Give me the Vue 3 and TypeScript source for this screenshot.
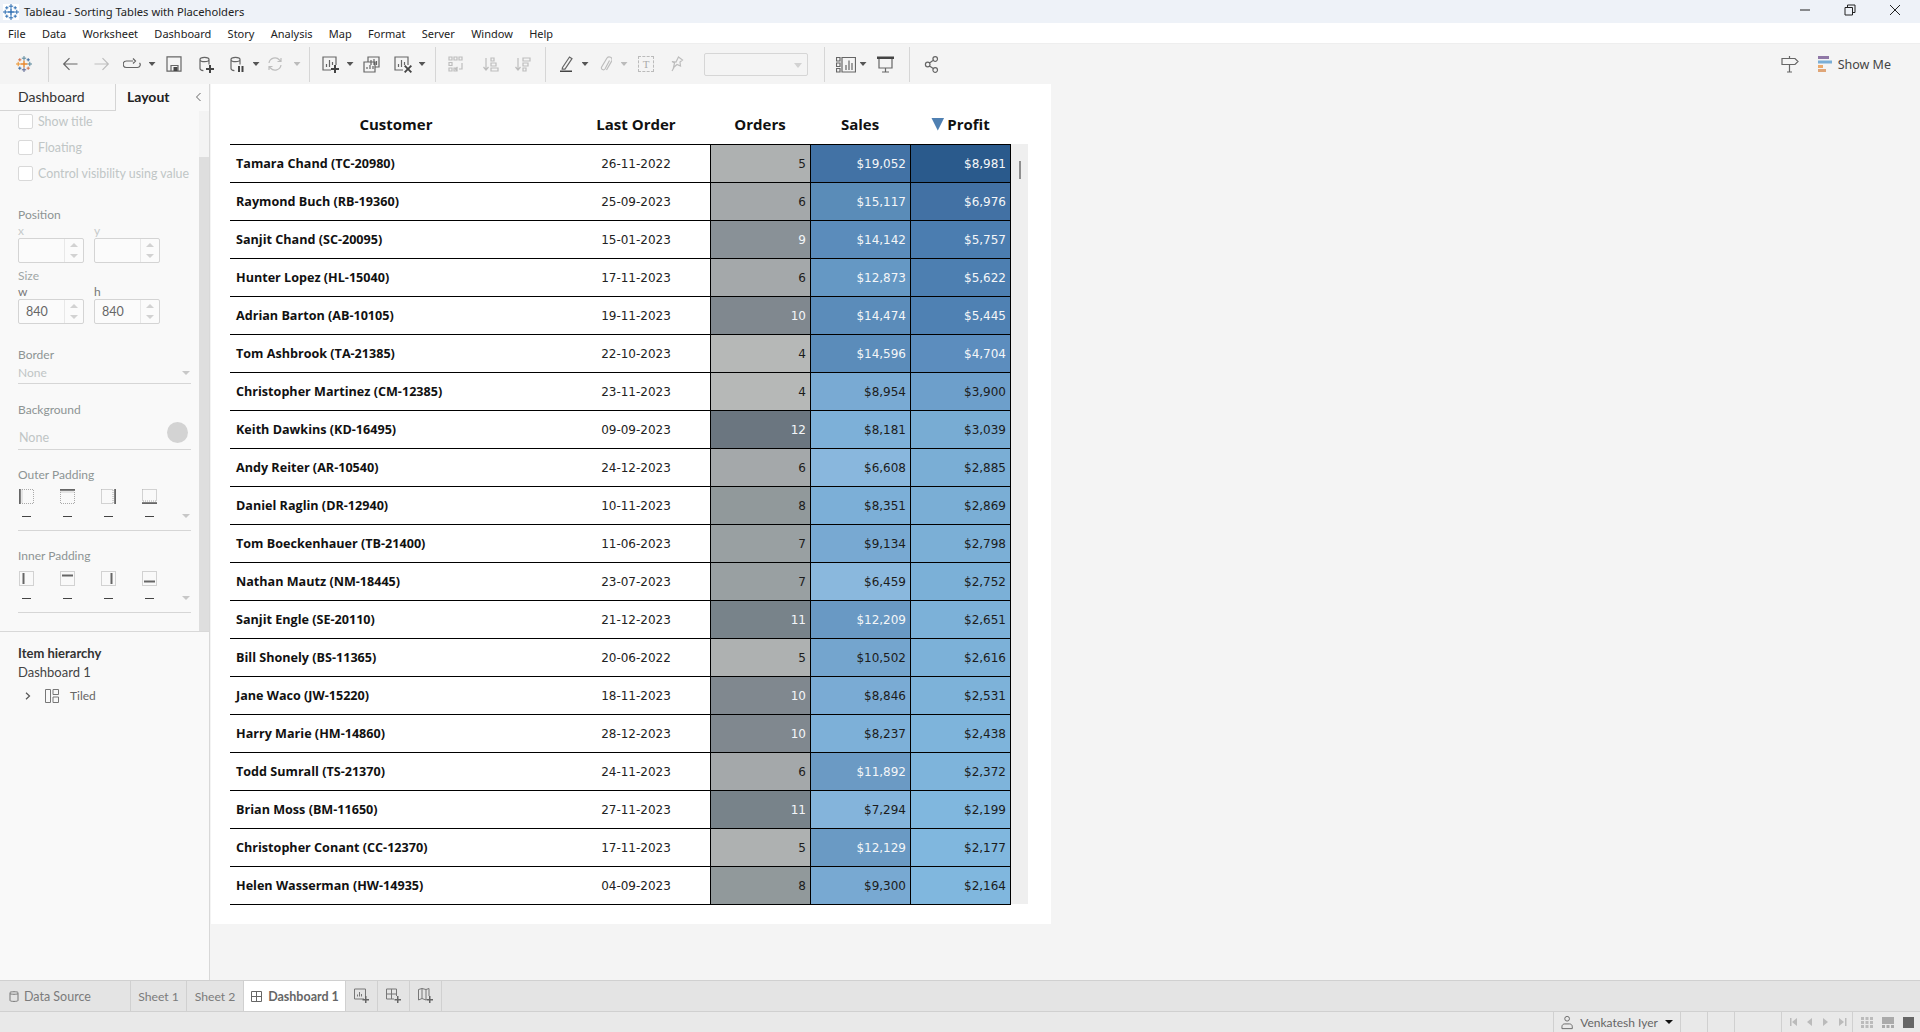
<script setup lang="ts">
interface Row {
  name: string;
  date: string;
  orders: number;
  sales: number;
  profit: number;
}

interface Tool {
  c: number;
  w: number;
  kind?: "caret" | "sep" | "logo" | "select" | "text";
  d?: string;
  f?: string;
  dim?: boolean;
}

type Stop = [number, number, number, number];

const rows: Row[] = [
  { name: "Tamara Chand (TC-20980)", date: "26-11-2022", orders: 5, sales: 19052, profit: 8981 },
  { name: "Raymond Buch (RB-19360)", date: "25-09-2023", orders: 6, sales: 15117, profit: 6976 },
  { name: "Sanjit Chand (SC-20095)", date: "15-01-2023", orders: 9, sales: 14142, profit: 5757 },
  { name: "Hunter Lopez (HL-15040)", date: "17-11-2023", orders: 6, sales: 12873, profit: 5622 },
  { name: "Adrian Barton (AB-10105)", date: "19-11-2023", orders: 10, sales: 14474, profit: 5445 },
  { name: "Tom Ashbrook (TA-21385)", date: "22-10-2023", orders: 4, sales: 14596, profit: 4704 },
  { name: "Christopher Martinez (CM-12385)", date: "23-11-2023", orders: 4, sales: 8954, profit: 3900 },
  { name: "Keith Dawkins (KD-16495)", date: "09-09-2023", orders: 12, sales: 8181, profit: 3039 },
  { name: "Andy Reiter (AR-10540)", date: "24-12-2023", orders: 6, sales: 6608, profit: 2885 },
  { name: "Daniel Raglin (DR-12940)", date: "10-11-2023", orders: 8, sales: 8351, profit: 2869 },
  { name: "Tom Boeckenhauer (TB-21400)", date: "11-06-2023", orders: 7, sales: 9134, profit: 2798 },
  { name: "Nathan Mautz (NM-18445)", date: "23-07-2023", orders: 7, sales: 6459, profit: 2752 },
  { name: "Sanjit Engle (SE-20110)", date: "21-12-2023", orders: 11, sales: 12209, profit: 2651 },
  { name: "Bill Shonely (BS-11365)", date: "20-06-2022", orders: 5, sales: 10502, profit: 2616 },
  { name: "Jane Waco (JW-15220)", date: "18-11-2023", orders: 10, sales: 8846, profit: 2531 },
  { name: "Harry Marie (HM-14860)", date: "28-12-2023", orders: 10, sales: 8237, profit: 2438 },
  { name: "Todd Sumrall (TS-21370)", date: "24-11-2023", orders: 6, sales: 11892, profit: 2372 },
  { name: "Brian Moss (BM-11650)", date: "27-11-2023", orders: 11, sales: 7294, profit: 2199 },
  { name: "Christopher Conant (CC-12370)", date: "17-11-2023", orders: 5, sales: 12129, profit: 2177 },
  { name: "Helen Wasserman (HW-14935)", date: "04-09-2023", orders: 8, sales: 9300, profit: 2164 },
];

const orderStops: Stop[] = [
  [4, 182, 184, 183],
  [5, 174, 177, 177],
  [6, 164, 168, 170],
  [7, 153, 160, 162],
  [8, 145, 153, 155],
  [9, 137, 145, 151],
  [10, 128, 136, 143],
  [11, 120, 131, 138],
  [12, 107, 118, 128],
];
const salesStops: Stop[] = [
  [6459, 138, 184, 221],
  [8181, 125, 176, 216],
  [9134, 120, 169, 210],
  [10502, 116, 165, 206],
  [11892, 107, 154, 196],
  [12873, 101, 152, 196],
  [14142, 91, 140, 187],
  [15117, 90, 140, 184],
  [19052, 66, 114, 165],
];
const profitStops: Stop[] = [
  [2164, 128, 183, 222],
  [2885, 122, 174, 213],
  [3900, 109, 159, 203],
  [4704, 92, 141, 190],
  [5445, 79, 129, 179],
  [5757, 75, 125, 176],
  [6976, 66, 113, 164],
  [8981, 42, 90, 140],
];

const shade = (value: number, stops: Stop[]): string => {
  for (let i = 1; i < stops.length; i++) {
    if (value <= stops[i][0]) {
      const a = stops[i - 1];
      const b = stops[i];
      const t = (value - a[0]) / (b[0] - a[0]);
      const mix = (n: number): number => Math.round(a[n] + (b[n] - a[n]) * t);
      return `rgb(${mix(1)},${mix(2)},${mix(3)})`;
    }
  }
  return "#888";
};

const money = (n: number): string => "$" + n.toLocaleString("en-US");

const menus = ["File", "Data", "Worksheet", "Dashboard", "Story", "Analysis", "Map", "Format", "Server", "Window", "Help"];

const cylinder = "M2 3.5c0-1.3 2-2.2 4.5-2.2S11 2.2 11 3.5v5M2 3.5c0 1.3 2 2.2 4.5 2.2S11 4.8 11 3.5M2 3.5v9c0 1 1.3 1.9 3.4 2.1";

const toolDefs: Tool[] = [
  { c: 24, w: 16, kind: "logo" },
  { c: 48, w: 1, kind: "sep" },
  { c: 70, w: 16, d: "M15.5 8H1.5M7.5 2.2L1.7 8l5.8 5.8" },
  { c: 102, w: 16, dim: true, d: "M.5 8h14M8.5 2.2L14.3 8l-5.8 5.8" },
  { c: 132, w: 18, d: "M10 5H3.5a2.8 2.8 0 0 0 0 6.5h11a2.8 2.8 0 0 0 2-4.700M10 2.500L12.500 5 10 7.500" },
  { c: 152, w: 7, kind: "caret" },
  { c: 174, w: 16, d: "M1 .8h14v14.400H1zM5 15V9.500h7V15", f: "M7.500 11h4v4h-4z" },
  { c: 206, w: 17, d: cylinder, f: "M11 9h2v3h3v2h-3v3h-2v-3H8v-2h3z" },
  { c: 237, w: 16, d: cylinder, f: "M9 10h2v6H9zM12.500 10h2v6h-2z" },
  { c: 256, w: 7, kind: "caret" },
  { c: 275, w: 16, dim: true, d: "M2 7a6 6 0 0 1 10.500-3l1.500 1.500M14 9a6 6 0 0 1-10.500 3L2 10.500M14 2v3.500h-3.500M2 14v-3.500h3.500" },
  { c: 297, w: 7, dim: true, kind: "caret" },
  { c: 309, w: 1, kind: "sep" },
  { c: 331, w: 19, d: "M9 14H1V1h13v8M4.500 11V8M7.500 11V4M10.500 9V6", f: "M12 9h2v3h3v2h-3v3h-2v-3H9v-2h3z" },
  { c: 350, w: 7, kind: "caret" },
  { c: 371, w: 17, d: "M5 6V1h11v10h-4M1 6h11v10H1zM8 4V9M11 3v6M13.500 5v4M4 13v-2M7 13v-4M10 13v-3" },
  { c: 403, w: 19, d: "M9 14H1V1h13v8M4.500 11V8M7.500 11V4M10.500 9V6", f: "M11.300 9L14 11.700 16.700 9l1.300 1.300-2.700 2.700 2.700 2.700L16.700 17 14 14.300 11.300 17 10 15.700l2.700-2.700L10 10.300z" },
  { c: 422, w: 7, kind: "caret" },
  { c: 435.5, w: 1, kind: "sep" },
  { c: 456, w: 17, dim: true, d: "M1 1h3v3H1zM6 1h3v3H6zM11 1h3v3h-3zM1 6.500h3v3H1zM1 12h3v3H1zM6 12h3v3H6zM14 7v6h-3M9.500 11l-2 2 2 2" },
  { c: 490, w: 17, dim: true, d: "M4 2v12M1.500 11L4 14l2.500-3M9 2h3v3H9zM9 7h5v3H9zM9 12h7v3H9z" },
  { c: 522, w: 17, dim: true, d: "M4 2v12M1.500 11L4 14l2.500-3M9 2h7v3H9zM9 7h5v3H9zM9 12h3v3H9z" },
  { c: 545, w: 1, kind: "sep" },
  { c: 567, w: 16, d: "M3.500 11.500L10.500 1l2.500 1.700-7 10.500-2.800 0z", f: "M1 14.500h12v1.500H1z" },
  { c: 585, w: 7, kind: "caret" },
  { c: 606, w: 12, dim: true, d: "M9.500 4.500L5 13a2 2 0 0 1-3.500-1.800L7 2a2.800 2.800 0 0 1 4.800 2.800L6.500 14" },
  { c: 624, w: 7, dim: true, kind: "caret" },
  { c: 646, w: 16, dim: true, kind: "text" },
  { c: 677, w: 14, dim: true, d: "M8.500 1l4 3-2.500 2 .5 4-3.500-1.500-3.500 3 1-4.500L2 5.500l4 .5zM4 11.500L2 15" },
  { c: 756, w: 104, kind: "select" },
  { c: 824, w: 1, kind: "sep" },
  { c: 846, w: 20, d: "M.5 1.500h3.500v3.500H.5zM.5 7h3.500v3.500H.5zM.5 12.500h3.500v3.500H.5zM6 1.500h13.500v14.500H6zM10 14V9M13 14V4.500M16 14v-7" },
  { c: 863, w: 7, kind: "caret" },
  { c: 885, w: 17, d: "M2 2h13v10H2zM8.500 12v4M5 16h7", f: "M0 .5h17v2.500H0z" },
  { c: 909, w: 1, kind: "sep" },
  { c: 932, w: 16, d: "M5.500 7L10 3.800M5.500 10L10 13M13.500 3a2.300 2.300 0 1 1-4.600 0 2.300 2.300 0 0 1 4.600 0zM6 8.500a2.300 2.300 0 1 1-4.600 0 2.300 2.300 0 0 1 4.600 0zM13.500 14a2.300 2.300 0 1 1-4.600 0 2.300 2.300 0 0 1 4.600 0z" },
];

// gap before each tool comes from the centre it should sit on
const tools = toolDefs.map((t, i) => {
  const prev = i ? toolDefs[i - 1].c + toolDefs[i - 1].w / 2 : 0;
  return { ...t, gap: t.c - t.w / 2 - prev };
});

const crosses = [
  { x: 8, y: 8, r: 3.5, s: 1.4, color: "#e8862c" },
  { x: 8, y: 2.2, r: 2.2, s: 1, color: "#5b879b" },
  { x: 8, y: 13.8, r: 2.2, s: 1, color: "#5c6692" },
  { x: 2.2, y: 8, r: 2.2, s: 1, color: "#eb912b" },
  { x: 13.8, y: 8, r: 2.2, s: 1, color: "#59879b" },
  { x: 3.8, y: 3.8, r: 1.6, s: 1, color: "#d0704a" },
  { x: 12.2, y: 3.8, r: 1.6, s: 1, color: "#3a6a9e" },
  { x: 3.8, y: 12.2, r: 1.6, s: 1, color: "#3a6a9e" },
  { x: 12.2, y: 12.2, r: 1.6, s: 1, color: "#d0704a" },
];

const paddingIcons = [
  { bar: "M.8 0v15", box: "M3 .5h11.500v14H3z" },
  { bar: "M0 .8h15", box: "M.5 3h14v11.500H.5z" },
  { bar: "M14.200 0v15", box: "M.5 .5H12v14H.5z" },
  { bar: "M0 14.200h15", box: "M.5 .5h14V12H.5z" },
];
const innerIcons = [
  { bar: "M4.500 2v11", box: "M.5 .5h14v14H.5z" },
  { bar: "M2 4.500h11", box: "M.5 .5h14v14H.5z" },
  { bar: "M10.500 2v11", box: "M.5 .5h14v14H.5z" },
  { bar: "M2 10.500h11", box: "M.5 .5h14v14H.5z" },
];
</script>

<template>
  <div class="app">
    <header class="titlebar">
      <svg class="title-logo" width="16" height="16" viewBox="0 0 16 16">
        <path v-for="(c, i) in crosses" :key="i" :d="`M${c.x - c.r} ${c.y}h${c.r * 2}M${c.x} ${c.y - c.r}v${c.r * 2}`" stroke="#2f6fb3" :stroke-width="c.s" />
      </svg>
      <span class="title-text">Tableau - Sorting Tables with Placeholders</span>
      <div class="win-controls">
        <svg width="12" height="12" viewBox="0 0 12 12"><path d="M1 6h10" stroke="#222" fill="none" /></svg>
        <svg width="12" height="12" viewBox="0 0 12 12"><path d="M1 3.500h7.500V11H1zM3.500 3.500V1H11v7.500H8.500" stroke="#222" fill="none" /></svg>
        <svg width="12" height="12" viewBox="0 0 12 12"><path d="M1 1l10 10M11 1L1 11" stroke="#222" fill="none" /></svg>
      </div>
    </header>

    <nav class="menubar">
      <span v-for="m in menus" :key="m" class="menu">{{ m }}</span>
    </nav>

    <div class="toolbar">
      <template v-for="(t, i) in tools" :key="i">
        <span v-if="t.kind === 'sep'" class="tb-sep" :style="{ marginLeft: t.gap + 'px' }"></span>
        <span v-else-if="t.kind === 'caret'" class="tb-caret" :class="{ dim: t.dim }" :style="{ marginLeft: t.gap + 'px' }"></span>
        <span v-else-if="t.kind === 'select'" class="tb-select" :style="{ marginLeft: t.gap + 'px' }"><i></i></span>
        <span v-else-if="t.kind === 'text'" class="tb-textbox" :style="{ marginLeft: t.gap + 'px' }">T</span>
        <svg v-else-if="t.kind === 'logo'" :width="t.w" height="16" viewBox="0 0 16 16" :style="{ marginLeft: t.gap + 'px' }">
          <path v-for="(c, j) in crosses" :key="j" :d="`M${c.x - c.r} ${c.y}h${c.r * 2}M${c.x} ${c.y - c.r}v${c.r * 2}`" :stroke="c.color" :stroke-width="c.s" />
        </svg>
        <svg v-else :width="t.w" height="17" :viewBox="`0 0 ${t.w} 17`" :class="['tb-icon', { dim: t.dim }]" :style="{ marginLeft: t.gap + 'px' }">
          <path :d="t.d" />
          <path v-if="t.f" :d="t.f" class="solid" />
        </svg>
      </template>

      <div class="tb-right">
        <svg width="18" height="18" viewBox="0 0 18 18" class="tb-icon">
          <path d="M1 3.500h13l3 3-3 3H1zM8.500 1v2.500M8.500 9.500V17M6 17h5" />
        </svg>
        <span class="showme">
          <svg width="14" height="16" viewBox="0 0 14 16">
            <rect x="0" y="0" width="11" height="3" fill="#8f77a6" />
            <rect x="0" y="4.500" width="14" height="3" fill="#7aaed6" />
            <rect x="0" y="9" width="5" height="3" fill="#eaa96c" />
            <rect x="0" y="13" width="8" height="3" fill="#dfa577" />
          </svg>
          Show Me
        </span>
      </div>
    </div>

    <div class="main">
      <aside class="side">
        <div class="side-tabs">
          <span class="side-tab">Dashboard</span>
          <span class="side-tab on">Layout</span>
          <svg width="7" height="10" viewBox="0 0 7 10"><path d="M5.500 1L1.500 5l4 4" fill="none" stroke="#666" /></svg>
        </div>

        <div class="side-scroll">
          <div class="side-body">
            <label class="check"><i></i>Show title</label>
            <label class="check"><i></i>Floating</label>
            <label class="check"><i></i>Control visibility using value</label>

            <div class="lab pos-lab">Position</div>
            <div class="field-labs dim-lab"><span>x</span><span>y</span></div>
            <div class="fields">
              <div class="spin"><span></span><em><b></b><u></u></em></div>
              <div class="spin"><span></span><em><b></b><u></u></em></div>
            </div>

            <div class="lab size-lab">Size</div>
            <div class="field-labs"><span>w</span><span>h</span></div>
            <div class="fields">
              <div class="spin"><span>840</span><em><b></b><u></u></em></div>
              <div class="spin"><span>840</span><em><b></b><u></u></em></div>
            </div>

            <div class="lab border-lab">Border</div>
            <div class="none-row">None<i class="down"></i></div>

            <div class="lab bg-lab">Background</div>
            <div class="bg-row">None<i class="swatch"></i></div>

            <div class="lab pad-lab">Outer Padding</div>
            <div class="pads">
              <svg v-for="(p, i) in paddingIcons" :key="i" width="15" height="15" viewBox="0 0 15 15">
                <path :d="p.box" class="dots" />
                <path :d="p.bar" class="bar" />
              </svg>
            </div>
            <div class="pad-vals"><i></i><i></i><i></i><i></i><i class="down"></i></div>

            <div class="lab pad-lab">Inner Padding</div>
            <div class="pads inner">
              <svg v-for="(p, i) in innerIcons" :key="i" width="15" height="15" viewBox="0 0 15 15">
                <path :d="p.box" class="dots" />
                <path :d="p.bar" class="bar" />
              </svg>
            </div>
            <div class="pad-vals"><i></i><i></i><i></i><i></i><i class="down"></i></div>
          </div>
          <div class="side-bar"><div class="side-thumb"></div></div>
        </div>

        <div class="hierarchy">
          <div class="h-title">Item hierarchy</div>
          <div class="h-dash">Dashboard 1</div>
          <div class="h-tiled">
            <svg width="6" height="8" viewBox="0 0 6 8"><path d="M1 .8L4.500 4 1 7.200" fill="none" stroke="#555" stroke-width="1.200" /></svg>
            <svg width="14" height="14" viewBox="0 0 14 14"><path d="M.5 .5h5v13h-5zM8 .5h5.500v5H8zM8 8h5.500v5.500H8z" fill="none" stroke="#777" /></svg>
            <span>Tiled</span>
          </div>
        </div>
      </aside>

      <section class="stage">
        <div class="canvas">
          <div class="thead">
            <div>Customer</div>
            <div>Last Order</div>
            <div>Orders</div>
            <div>Sales</div>
            <div class="sorted"><i></i>Profit</div>
          </div>
          <div class="tbody-wrap">
            <div class="tbody">
              <div v-for="r in rows" :key="r.name" class="row">
                <div class="c-name">{{ r.name }}</div>
                <div class="c-date">{{ r.date }}</div>
                <div class="c-num" :class="{ light: r.orders >= 9 }" :style="{ background: shade(r.orders, orderStops) }">{{ r.orders }}</div>
                <div class="c-num" :class="{ light: r.sales >= 11000 }" :style="{ background: shade(r.sales, salesStops) }">{{ money(r.sales) }}</div>
                <div class="c-num" :class="{ light: r.profit >= 4000 }" :style="{ background: shade(r.profit, profitStops) }">{{ money(r.profit) }}</div>
              </div>
            </div>
            <div class="tscroll"><div class="tthumb"></div></div>
          </div>
        </div>
      </section>
    </div>

    <div class="sheet-tabs">
      <div class="s-tab ds">
        <svg width="10" height="13" viewBox="0 0 10 13"><path d="M1 2.500C1 1.500 9 1.500 9 2.500v8c0 1.200-8 1.200-8 0zM1 3.500c0 1 8 1 8 0" fill="none" stroke="#777" /></svg>
        Data Source
      </div>
      <div class="s-tab sh1">Sheet 1</div>
      <div class="s-tab sh2">Sheet 2</div>
      <div class="s-tab active">
        <svg width="13" height="13" viewBox="0 0 13 13"><path d="M1.500 1.500h10v10h-10zM6.500 1.500v10M1.500 6.500h10" fill="none" stroke="#666" /></svg>
        Dashboard 1
      </div>
      <div class="s-tab add">
        <svg width="16" height="16" viewBox="0 0 16 16"><path d="M10 11H.5V1h11v7M3.500 8.500V6.500M5.500 8.500V4M7.500 8.500V6" fill="none" stroke="#777" /><path d="M11 8h1.500v3H15v1.500h-2.500V15H11v-2.500H8.500V11H11z" fill="#666" /></svg>
      </div>
      <div class="s-tab add">
        <svg width="16" height="16" viewBox="0 0 16 16"><path d="M8 11H.5V1h10v7M5.500 1v10M.5 6h10" fill="none" stroke="#777" /><path d="M11 8h1.500v3H15v1.500h-2.500V15H11v-2.500H8.500V11H11z" fill="#666" /></svg>
      </div>
      <div class="s-tab add">
        <svg width="16" height="16" viewBox="0 0 16 16"><path d="M8 12l-4-1.500L.5 12V1.500L4 .5l4 1 3 -1V8M4 .5v10M8 1.500V12" fill="none" stroke="#777" /><path d="M11 8h1.500v3H15v1.500h-2.500V15H11v-2.500H8.500V11H11z" fill="#666" /></svg>
      </div>
    </div>

    <footer class="status">
      <div class="st user">
        <svg width="13" height="15" viewBox="0 0 13 15"><path d="M6.500 1a2.500 2.500 0 1 1 0 5 2.500 2.500 0 0 1 0-5zM1 14v-2c0-2 1.500-3 3-3h5c1.500 0 3 1 3 3v2z" fill="none" stroke="#666" /></svg>
        <span>Venkatesh Iyer</span>
        <i></i>
      </div>
      <div class="st w27"></div>
      <div class="st w27"></div>
      <div class="st w47"></div>
      <div class="st pager">
        <svg width="60" height="10" viewBox="0 0 60 10" fill="#bbb">
          <path d="M0 1h1.500v8H0zM7 1v8L2 5zM22 1v8l-5-4zM33 1l5 4-5 4zM49 1l5 4-5 4zM55 1h1.500v8H55z" />
        </svg>
      </div>
      <div class="st views">
        <svg width="12" height="11" viewBox="0 0 12 11" fill="#bbb">
          <path d="M0 0h3v3H0zM4.500 0h3v3h-3zM9 0h3v3H9zM0 4h3v3H0zM4.500 4h3v3h-3zM9 4h3v3H9zM0 8h3v3H0zM4.500 8h3v3h-3zM9 8h3v3H9z" />
        </svg>
        <svg width="12" height="11" viewBox="0 0 12 11" fill="#aaa">
          <path d="M0 0h12v7H0zM0 8h3v3H0zM4.500 8h3v3h-3zM9 8h3v3H9z" />
        </svg>
        <span class="full"></span>
      </div>
    </footer>
  </div>
</template>

<style scoped>
.app {
  width: 1920px;
  height: 1032px;
  display: flex;
  flex-direction: column;
  overflow: hidden;
  font-family: Lato, "Noto Sans", sans-serif;
  color: #333;
  background: #f4f4f4;
}

.titlebar {
  height: 23px;
  flex: none;
  display: flex;
  align-items: center;
  background: #eef2f8;
  padding-left: 3px;
  font-family: "Noto Sans", sans-serif;
  font-size: 11.2px;
  color: #222;
}
.title-logo {
  background: #fff;
  margin-right: 5px;
}
.win-controls {
  margin-left: auto;
  display: flex;
  gap: 33px;
  padding-right: 19px;
  margin-top: -3px;
}

.menubar {
  height: 20px;
  flex: none;
  display: flex;
  align-items: center;
  background: #fff;
  font-family: "Noto Sans", sans-serif;
  font-size: 11px;
  color: #222;
  padding-left: 8px;
  gap: 16.3px;
}

.toolbar {
  height: 41px;
  flex: none;
  display: flex;
  align-items: center;
  background: #f4f4f4;
  border-top: 1px solid #eee;
  box-sizing: border-box;
}
.tb-sep {
  width: 1px;
  height: 35px;
  background: #d6d6d6;
}
.tb-caret {
  width: 7px;
  height: 4px;
  background: #555;
  clip-path: polygon(0 0, 100% 0, 50% 100%);
}
.tb-caret.dim {
  background: #bbb;
}
.tb-icon {
  fill: none;
  stroke: #666;
  stroke-width: 1.2;
}
.tb-icon .solid {
  fill: #444;
  stroke: none;
}
.tb-icon.dim {
  stroke: #bdbdbd;
}
.tb-icon.dim .solid {
  fill: #bdbdbd;
}
.tb-select {
  width: 104px;
  height: 23px;
  box-sizing: border-box;
  border: 1px solid #d6d6d6;
  border-radius: 2px;
  position: relative;
}
.tb-select i {
  position: absolute;
  right: 5px;
  top: 9px;
  border-left: 4px solid transparent;
  border-right: 4px solid transparent;
  border-top: 5px solid #d2d2d2;
}
.tb-textbox {
  width: 16px;
  height: 16px;
  box-sizing: border-box;
  border: 1px dashed #bbb;
  text-align: center;
  font: 11px/14px "Liberation Serif", serif;
  color: #aaa;
}
.tb-right {
  margin-left: auto;
  display: flex;
  align-items: center;
  padding-right: 29px;
  gap: 19px;
}
.showme {
  display: flex;
  align-items: center;
  gap: 6px;
  font-family: "Noto Sans", sans-serif;
  font-size: 12.5px;
  color: #444;
}

.main {
  flex: 1;
  min-height: 0;
  display: flex;
}

.side {
  width: 210px;
  flex: none;
  box-sizing: border-box;
  border-right: 1px solid #d8d8d8;
  background: #f9f9f9;
  display: flex;
  flex-direction: column;
}
.side-tabs {
  height: 27px;
  flex: none;
  display: flex;
  align-items: center;
  position: relative;
}
.side-tabs svg {
  position: absolute;
  right: 7px;
  top: 8px;
}
.side-tab {
  font-size: 14px;
  color: #333;
  height: 27px;
  line-height: 26px;
  box-sizing: border-box;
}
.side-tab:first-child {
  width: 116px;
  padding-left: 18px;
  border-right: 1px solid #d5d5d5;
  border-bottom: 1px solid #d5d5d5;
}
.side-tab.on {
  font-weight: 700;
  padding-left: 11px;
  color: #222;
}
.side-scroll {
  height: 520px;
  flex: none;
  display: flex;
  border-bottom: 1px solid #d8d8d8;
  box-sizing: content-box;
}
.side-body {
  flex: 1;
  padding-left: 18px;
  font-size: 11.5px;
  color: #888;
}
.side-bar {
  width: 10px;
  flex: none;
  background: #dedede;
}
.side-thumb {
  height: 46px;
  background: #f3f3f3;
}

.check {
  display: flex;
  align-items: center;
  gap: 5px;
  height: 21px;
  margin-bottom: 5px;
  font-size: 12.4px;
  color: #c0c6c6;
}
.check i {
  width: 15px;
  height: 15px;
  box-sizing: border-box;
  border: 1px solid #d9d9d9;
  border-radius: 2px;
  background: #fff;
}
.lab {
  height: 14px;
  line-height: 14px;
  font-size: 12px;
  color: #8d9494;
}
.pos-lab {
  margin-top: 24px;
}
.size-lab {
  margin-top: 6px;
  color: #a0a6a6;
}
.border-lab {
  margin-top: 24px;
}
.bg-lab {
  margin-top: 19px;
}
.pad-lab {
  margin-top: 18px;
}
.field-labs {
  display: flex;
  height: 16px;
  line-height: 17px;
  font-size: 12px;
  color: #777;
}
.field-labs span {
  width: 76px;
}
.field-labs.dim-lab {
  color: #c6caca;
}
.fields {
  display: flex;
  gap: 10px;
}
.spin {
  width: 66px;
  height: 25px;
  box-sizing: border-box;
  border: 1px solid #d4d4d4;
  border-radius: 2px;
  display: flex;
  align-items: center;
  background: #fbfbfb;
}
.spin span {
  flex: 1;
  padding-left: 7px;
  font-size: 12.5px;
  color: #666;
}
.spin em {
  width: 18px;
  height: 23px;
  border-left: 1px solid #e8e8e8;
  display: flex;
  flex-direction: column;
  align-items: center;
  justify-content: center;
  gap: 7px;
}
.spin b {
  border-left: 4px solid transparent;
  border-right: 4px solid transparent;
  border-bottom: 4px solid #d2d2d2;
}
.spin u {
  border-left: 4px solid transparent;
  border-right: 4px solid transparent;
  border-top: 4px solid #d2d2d2;
}
.none-row {
  width: 173px;
  height: 22px;
  box-sizing: border-box;
  border-bottom: 1px solid #d6d6d6;
  font-size: 12px;
  line-height: 22px;
  color: #bfc5c5;
  position: relative;
}
.down {
  position: absolute;
  right: 1px;
  top: 9px;
  border-left: 4px solid transparent;
  border-right: 4px solid transparent;
  border-top: 4px solid #c8c8c8;
}
.bg-row {
  width: 173px;
  height: 33px;
  box-sizing: border-box;
  border-bottom: 1px solid #d6d6d6;
  font-size: 12.5px;
  line-height: 42px;
  padding-left: 1px;
  color: #bfc5c5;
  position: relative;
}
.swatch {
  position: absolute;
  right: 3px;
  top: 5px;
  width: 21px;
  height: 21px;
  border-radius: 50%;
  background: #d3d3d3;
}
.pads {
  display: flex;
  gap: 26px;
  height: 15px;
  margin-top: 7px;
  padding-left: 1px;
}
.pads.inner {
  margin-top: 8px;
}
.dots {
  fill: none;
  stroke: #aaa;
  stroke-dasharray: 1 1;
}
.bar {
  fill: none;
  stroke: #666;
  stroke-width: 2;
}
.pad-vals {
  width: 173px;
  height: 27px;
  box-sizing: border-box;
  border-bottom: 1px solid #d6d6d6;
  display: flex;
  gap: 32px;
  align-items: flex-start;
  padding: 12px 0 0 4px;
  position: relative;
}
.pad-vals i {
  width: 9px;
  height: 1px;
  background: #444;
}
.pad-vals i.down {
  width: 0;
  height: 0;
  background: none;
  top: 10px;
}

.hierarchy {
  padding: 12px 0 0 18px;
  font-size: 13px;
  line-height: 19px;
  color: #444;
}
.h-title {
  font-weight: 700;
  color: #333;
}
.h-tiled {
  display: flex;
  align-items: center;
  margin-top: 4px;
  font-size: 12px;
  color: #666;
}
.h-tiled svg:first-child {
  margin: 0 14px 0 7px;
}
.h-tiled span {
  margin-left: 11px;
}

.stage {
  flex: 1;
  padding-left: 1px;
}
.canvas {
  width: 840px;
  height: 840px;
  box-sizing: border-box;
  background: #fff;
  padding: 16px 0 0 19px;
}
.thead {
  height: 44px;
  display: grid;
  grid-template-columns: 332px 148px 100px 100px 101px;
  align-items: center;
  justify-items: center;
  font-family: "Open Sans", sans-serif;
  font-weight: 700;
  font-size: 15px;
  color: #111;
  width: 781px;
  padding-top: 4px;
  box-sizing: border-box;
}
.sorted {
  display: flex;
  align-items: center;
  gap: 3px;
}
.sorted i {
  width: 13px;
  height: 13px;
  background: #4f80b2;
  clip-path: polygon(0 0, 100% 0, 50% 100%);
}
.tbody-wrap {
  display: flex;
  align-items: flex-start;
}
.tbody {
  width: 781px;
  flex: none;
  border-top: 1px solid #000;
  box-sizing: border-box;
}
.row {
  height: 38px;
  box-sizing: border-box;
  display: grid;
  grid-template-columns: 332px 148px 100px 100px 101px;
  grid-template-rows: 37px;
  border-bottom: 1px solid #000;
  font-size: 12px;
  color: #222;
}
.c-name {
  font-family: "Open Sans", sans-serif;
  font-weight: 700;
  font-size: 12.6px;
  line-height: 37px;
  padding-left: 6px;
  color: #111;
}
.c-date {
  font-family: "DejaVu Sans", sans-serif;
  text-align: center;
  line-height: 38px;
  font-size: 12px;
}
.c-num {
  font-family: "DejaVu Sans", sans-serif;
  text-align: right;
  line-height: 38px;
  padding-right: 4px;
  border-left: 1px solid #000;
  color: #1c1c1c;
}
.c-num:last-child {
  border-right: 1px solid #000;
}
.c-num.light {
  color: #f4f6f8;
}
.tscroll {
  width: 17px;
  height: 760px;
  flex: none;
  background: #efefef;
  padding: 17px 0 0 8px;
  box-sizing: border-box;
}
.tthumb {
  width: 2px;
  height: 18px;
  background: #8f8f8f;
}

.sheet-tabs {
  height: 30px;
  flex: none;
  display: flex;
  box-sizing: content-box;
  background: #e4e4e4;
  border-top: 1px solid #d0d0d0;
  border-bottom: 1px solid #d0d0d0;
  margin-bottom: -1px;
  font-size: 12.5px;
  color: #7b7b7b;
}
.s-tab {
  display: flex;
  align-items: center;
  justify-content: center;
  gap: 5px;
  box-sizing: border-box;
  border-right: 1px solid #d0d0d0;
}
.s-tab.ds {
  width: 131px;
  justify-content: flex-start;
  padding-left: 9px;
  gap: 5px;
}
.sh1 {
  width: 56px;
  font-size: 12.2px;
}
.sh2 {
  width: 57px;
  font-size: 12.2px;
}
.s-tab.active {
  width: 102px;
  background: #fff;
  font-weight: 700;
  color: #666;
  font-size: 12.5px;
}
.s-tab.add {
  width: 32px;
}

.status {
  height: 21px;
  flex: none;
  display: flex;
  justify-content: flex-end;
  background: #e9e9e9;
  border-top: 1px solid #d0d0d0;
  box-sizing: border-box;
  font-size: 12px;
  color: #666;
}
.st {
  height: 100%;
  border-left: 1px solid #d0d0d0;
  box-sizing: border-box;
  display: flex;
  align-items: center;
}
.user {
  width: 127px;
  padding-left: 7px;
  gap: 7px;
}
.user span {
  white-space: nowrap;
}
.user i {
  margin-left: auto;
  margin-right: 7px;
  border-left: 4px solid transparent;
  border-right: 4px solid transparent;
  border-top: 4px solid #111;
}
.w27 {
  width: 27px;
}
.w47 {
  width: 47px;
}
.pager {
  width: 71px;
  padding-left: 8px;
}
.views {
  width: 68px;
  padding-left: 8px;
  gap: 9px;
}
.full {
  width: 11px;
  height: 11px;
  background: #666;
}
</style>

<style>
html,
body {
  margin: 0;
  background: #f4f4f4;
}
</style>
